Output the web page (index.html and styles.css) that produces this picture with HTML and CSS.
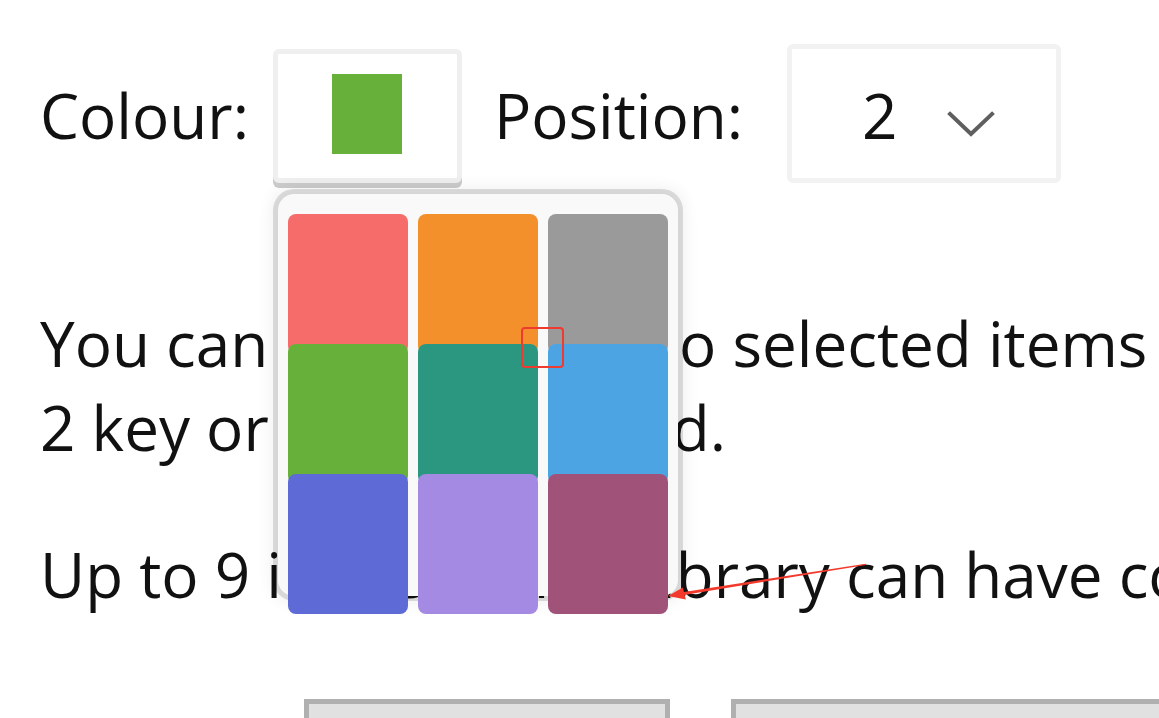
FILE: index.html
```html
<!DOCTYPE html>
<html lang="en">
<head>
<meta charset="utf-8">
<title>Colour picker</title>
<link rel="stylesheet" href="styles.css">
</head>
<body>
<div class="page">
  <div class="toolbar">
    <span class="label">Colour:</span>
    <div class="picker">
      <button class="colour-btn" type="button"><span class="chip"></span></button>
      <div class="popup">
        <div class="grid">
          <span class="swatch c-red"></span>
          <span class="swatch c-orange"></span>
          <span class="swatch c-gray"></span>
          <span class="swatch c-green"></span>
          <span class="swatch c-teal"></span>
          <span class="swatch c-blue"></span>
          <span class="swatch c-indigo"></span>
          <span class="swatch c-lavender"></span>
          <span class="swatch c-plum"></span>
        </div>
      </div>
    </div>
    <span class="label label-pos">Position:</span>
    <div class="select">
      <span class="select-value">2</span>
      <svg class="chevron" width="48" height="26" viewBox="0 0 48 26"><polyline points="3,3 24,23 45,3" fill="none" stroke="#5f5f5f" stroke-width="4" stroke-linecap="square" stroke-linejoin="miter"/></svg>
    </div>
  </div>

  <p class="text first">You can apply colour to selected items by pressing the Ctrl+<br>2 key or when required.</p>
  <p class="text second">Up to 9 items in that library can have colours assigned.</p>

  <div class="buttons">
    <div class="btn"></div>
    <div class="btn btn-wide"></div>
  </div>

  <span class="mark-box"></span>
  <svg class="mark-arrow" width="1159" height="718" viewBox="0 0 1159 718">
    <polygon points="684,591.9 684,594.9 866,565 865.6,563.8" fill="#f2392c"/>
    <polygon points="668,596 685.8,599.6 682.8,587.5" fill="#f2392c"/>
  </svg>
</div>
</body>
</html>
```

FILE: styles.css
```css
html, body {
  margin: 0;
  padding: 0;
  background: #ffffff;
  overflow: hidden;
}

.page {
  position: relative;
  width: 1159px;
  height: 718px;
  overflow: hidden;
  padding-left: 40px;
  box-sizing: border-box;
  font-family: "Open Sans", "Noto Sans", sans-serif;
  font-size: 62px;
  line-height: 84px;
  color: #111111;
}

.toolbar {
  display: flex;
  align-items: flex-start;
  padding-top: 44px;
  white-space: nowrap;
}

.label {
  margin-top: 29px;
}

.label-pos {
  margin-left: 32px;
}

.picker {
  position: relative;
  margin-left: 24px;
  margin-top: 5px;
  z-index: 5;
}

.colour-btn {
  display: flex;
  align-items: center;
  justify-content: center;
  width: 189px;
  height: 134px;
  padding: 0 0 4px 0;
  box-sizing: border-box;
  background: #ffffff;
  border: 5px solid #efefef;
  border-radius: 6px;
  box-shadow: 0 5px 0 #cbcbcb;
}

.chip {
  display: block;
  width: 70px;
  height: 80px;
  background: #67b03a;
}

.popup {
  position: absolute;
  left: 5px;
  top: 145px;
  width: 400px;
  height: 402px;
  box-sizing: border-box;
  padding: 20px 10px 0;
  background: #f9f9f9;
  border-radius: 16px;
  box-shadow: 0 0 0 5px rgba(0, 0, 0, 0.12), 0 0 16px 7px rgba(0, 0, 0, 0.06);
}

.grid {
  display: grid;
  grid-template-columns: repeat(3, 120px);
  column-gap: 10px;
}

.swatch {
  display: block;
  height: 140px;
  margin-bottom: -10px;
  border-radius: 8px;
}

.c-red { background: #f66c6b; }
.c-orange { background: #f4902c; }
.c-gray { background: #9a9a9a; }
.c-green { background: #67b03a; }
.c-teal { background: #2b9780; }
.c-blue { background: #4da4e2; }
.c-indigo { background: #5e6ad6; }
.c-lavender { background: #a48ae2; }
.c-plum { background: #a05278; }

.select {
  display: flex;
  align-items: center;
  margin-left: 44px;
  width: 274px;
  height: 139px;
  box-sizing: border-box;
  padding-left: 70px;
  border: 5px solid #f2f2f2;
  border-radius: 6px;
  background: #ffffff;
}

.select-value {
  display: block;
  width: 35px;
  padding-top: 2px;
}

.chevron {
  display: block;
  flex: none;
  margin-left: 50px;
  margin-top: 20px;
}

.text {
  margin: 0;
  white-space: nowrap;
}

.text.first {
  margin-top: 118px;
}

.text.second {
  margin-top: 63px;
}

.buttons {
  display: flex;
  gap: 61px;
  margin-top: 83px;
  margin-left: 264px;
}

.btn {
  flex: none;
  width: 366px;
  height: 60px;
  box-sizing: border-box;
  border: 5px solid #b0b0b0;
  background: #e1e1e1;
}

.btn-wide {
  width: 500px;
}

.mark-box {
  position: absolute;
  left: 521px;
  top: 327px;
  width: 43px;
  height: 41px;
  box-sizing: border-box;
  border: 2.5px solid #ef3b2f;
  border-radius: 4px;
  z-index: 10;
}

.mark-arrow {
  position: absolute;
  left: 0;
  top: 0;
  z-index: 10;
  pointer-events: none;
}
```
